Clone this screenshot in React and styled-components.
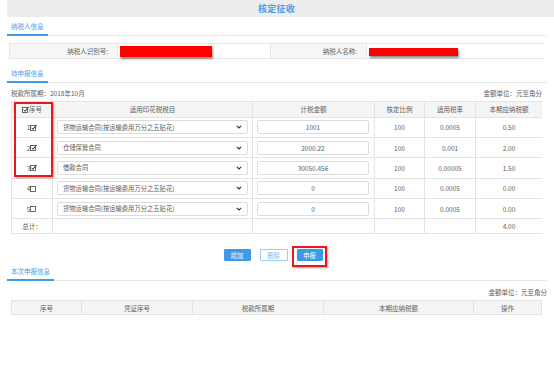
import React from "react";
import styled, { createGlobalStyle } from "styled-components";

const Global = createGlobalStyle`
  html, body { margin: 0; padding: 0; background: #fff; }
  body { font-family: "Noto Sans CJK SC", "Noto Sans", sans-serif; font-size: 6.5px; color: #666; }
  * { box-sizing: border-box; }
`;

const BLUE = "#3f9ae6";
const LINE = "#e6e6e6";
const TEXT = "#606060";

const Page = styled.div`
  position: relative;
  width: 554px;
  height: 367px;
  padding-left: 7px;
  overflow: hidden;
`;

const Header = styled.div`
  height: 17px;
  background: #ececec;
  display: flex;
  align-items: center;
  justify-content: center;
  padding-right: 8px;
  font-size: 9px;
  font-weight: bold;
  color: #4a9de6;
  letter-spacing: 0.2px;
`;

const Content = styled.div`
  width: 540px;
`;

const Tab = styled.div`
  height: ${(p) => p.$h || 19}px;
  margin-top: ${(p) => p.$mt || 0}px;
  border-bottom: 1px solid ${LINE};
  display: flex;
  align-items: flex-end;
`;

const TabLabel = styled.span`
  display: inline-block;
  padding: 0 4px 3px;
  border-bottom: 2px solid ${BLUE};
  margin-bottom: -1px;
  color: #4a9de6;
  font-size: 6.5px;
  line-height: 9px;
`;

const InfoGrid = styled.div`
  margin: 7px 3px 0 2px;
  display: grid;
  grid-template-columns: 108px 153px 96px 178px;
  height: 16px;
  border: 1px solid ${LINE};
`;

const InfoLabel = styled.div`
  background: #f7f7f7;
  border-right: 1px solid ${LINE};
  display: flex;
  align-items: center;
  justify-content: flex-end;
  padding-right: 9px;
  color: ${TEXT};
`;

const InfoValue = styled.div`
  background: #fff;
  border-right: ${(p) => (p.$last ? "none" : `1px solid ${LINE}`)};
  display: flex;
  align-items: center;
  padding-left: ${(p) => p.$pl}px;
`;

const Redact = styled.span`
  display: inline-block;
  width: ${(p) => p.$w}px;
  height: ${(p) => p.$h}px;
  margin-top: ${(p) => p.$mt || 0}px;
  background: #ff0000;
  box-shadow: 1px 1.5px 2px rgba(0, 0, 0, 0.45);
`;

const Meta = styled.div`
  display: flex;
  justify-content: space-between;
  align-items: center;
  height: 10px;
  margin: ${(p) => p.$m};
  color: ${TEXT};
`;

const Grid = styled.div`
  margin: ${(p) => p.$m};
  display: grid;
  grid-template-columns: ${(p) => p.$cols};
  grid-template-rows: ${(p) => p.$rows};
  gap: 1px;
  padding: 1px;
  background: #e4e4e4;
  width: 531px;
`;

const HeadCell = styled.div`
  background: #f5f5f5;
  display: flex;
  align-items: center;
  justify-content: center;
  color: ${TEXT};
`;

const Cell = styled.div`
  background: #fff;
  display: flex;
  align-items: center;
  justify-content: ${(p) => (p.$left ? "flex-start" : "center")};
  padding: ${(p) => p.$pad || "0"};
  color: ${TEXT};
`;

const Box = styled.span`
  display: inline-flex;
  width: 7px;
  height: 7px;
  margin-left: ${(p) => p.$ml || 0}px;
  margin-right: ${(p) => p.$mr || 0}px;
`;

const Check = ({ checked, ml, mr }) => (
  <Box $ml={ml} $mr={mr}>
    <svg width="7" height="7" viewBox="0 0 7 7">
      <rect x="0.5" y="1.5" width="5" height="5" fill="#fff" stroke="#444" strokeWidth="0.8" />
      {checked && <path d="M1.6 3.8 L3 5.3 L6.6 0.8" fill="none" stroke="#222" strokeWidth="1" />}
    </svg>
  </Box>
);

const Select = styled.div`
  width: 191px;
  height: 14px;
  border: 1px solid #dcdcdc;
  border-radius: 2px;
  display: flex;
  align-items: center;
  justify-content: space-between;
  padding: 0 5px 0 5px;
  color: ${TEXT};
  font-size: 6.3px;
`;

const Chevron = () => (
  <svg width="6" height="4" viewBox="0 0 6 4">
    <path d="M0.8 0.8 L3 3 L5.2 0.8" fill="none" stroke="#333" strokeWidth="1.1" />
  </svg>
);

const Input = styled.div`
  width: 112px;
  height: 14px;
  border: 1px solid #dcdcdc;
  border-radius: 2px;
  display: flex;
  align-items: center;
  justify-content: center;
  color: ${TEXT};
`;

const ButtonRow = styled.div`
  display: flex;
  justify-content: center;
  gap: 9px;
  margin: 15px 0 0 0;
  padding-right: 8px;
  height: 12px;
`;

const Button = styled.div`
  width: ${(p) => p.$w || 27}px;
  height: 12px;
  display: flex;
  align-items: center;
  justify-content: center;
  border-radius: 1px;
  font-size: 6.3px;
  background: ${(p) => (p.$outline ? "#fff" : BLUE)};
  color: ${(p) => (p.$outline ? "#7fb9ec" : "#fff")};
  border: 1px solid ${(p) => (p.$outline ? "#9fcbf0" : BLUE)};
`;

const Annot = styled.div`
  position: absolute;
  left: ${(p) => p.$x}px;
  top: ${(p) => p.$y}px;
  width: ${(p) => p.$w}px;
  height: ${(p) => p.$h}px;
  border: 2px solid #e8191e;
  box-shadow: 1px 1px 2px rgba(0, 0, 0, 0.35);
  pointer-events: none;
`;

const rows = [
  { n: 1, c: true, item: "货物运输合同(按运输费用万分之五贴花)", amt: "1001", ratio: "100", rate: "0.0005", tax: "0.50" },
  { n: 2, c: true, item: "仓储保管合同", amt: "2000.22", ratio: "100", rate: "0.001", tax: "2.00" },
  { n: 3, c: true, item: "借款合同", amt: "30050.456", ratio: "100", rate: "0.00005", tax: "1.50" },
  { n: 4, c: false, item: "货物运输合同(按运输费用万分之五贴花)", amt: "0", ratio: "100", rate: "0.0005", tax: "0.00" },
  { n: 5, c: false, item: "货物运输合同(按运输费用万分之五贴花)", amt: "0", ratio: "100", rate: "0.0005", tax: "0.00" },
];

export default function App() {
  return (
    <>
      <Global />
      <Page>
        <Header>核定征收</Header>
        <Content>
          <Tab $h={19}>
            <TabLabel>纳税人信息</TabLabel>
          </Tab>
          <InfoGrid>
            <InfoLabel>纳税人识别号:</InfoLabel>
            <InfoValue $pl={2}>
              <Redact $w={92} $h={11} />
            </InfoValue>
            <InfoLabel>纳税人名称:</InfoLabel>
            <InfoValue $pl={2} $last>
              <Redact $w={89} $h={8} $mt={2} />
            </InfoValue>
          </InfoGrid>

          <Tab $h={19} $mt={5}>
            <TabLabel>待申报信息</TabLabel>
          </Tab>
          <Meta $m="5px 5px 0 4px">
            <span>税款所属期：2018年10月</span>
            <span>金额单位：元至角分</span>
          </Meta>

          <Grid
            $m="3px 0 0 4px"
            $cols="40px 199px 121px 49px 50px 66px"
            $rows="14.5px repeat(5, 19.4px) 14px"
          >
            <HeadCell>
              <Check checked />
              序号
            </HeadCell>
            <HeadCell>适用印花税税目</HeadCell>
            <HeadCell>计税金额</HeadCell>
            <HeadCell>核定比例</HeadCell>
            <HeadCell>适用税率</HeadCell>
            <HeadCell>本期应纳税额</HeadCell>
            {rows.map((r) => (
              <React.Fragment key={r.n}>
                <Cell>
                  {r.n}
                  <Check checked={r.c} />
                </Cell>
                <Cell $left $pad="0 0 0 4px">
                  <Select>
                    <span>{r.item}</span>
                    <Chevron />
                  </Select>
                </Cell>
                <Cell $left $pad="0 0 0 4px">
                  <Input>{r.amt}</Input>
                </Cell>
                <Cell>{r.ratio}</Cell>
                <Cell>{r.rate}</Cell>
                <Cell>{r.tax}</Cell>
              </React.Fragment>
            ))}
            <Cell>总计：</Cell>
            <Cell />
            <Cell />
            <Cell />
            <Cell />
            <Cell>4.00</Cell>
          </Grid>

          <ButtonRow>
            <Button>增加</Button>
            <Button $outline $w={28}>删除</Button>
            <Button $w={26}>申报</Button>
          </ButtonRow>

          <Tab $h={19} $mt={1}>
            <TabLabel>本次申报信息</TabLabel>
          </Tab>
          <Meta $m="6px 0 0 4px">
            <span />
            <span>金额单位：元至角分</span>
          </Meta>
          <Grid $m="3px 0 0 4px" $cols="69px 110px 130px 149px 67px" $rows="13px">
            <HeadCell>序号</HeadCell>
            <HeadCell>凭证序号</HeadCell>
            <HeadCell>税款所属期</HeadCell>
            <HeadCell>本期应纳税额</HeadCell>
            <HeadCell>操作</HeadCell>
          </Grid>
        </Content>
        <Annot $x={14} $y={102} $w={39} $h={75} />
        <Annot $x={292} $y={246} $w={35} $h={21} />
      </Page>
    </>
  );
}
